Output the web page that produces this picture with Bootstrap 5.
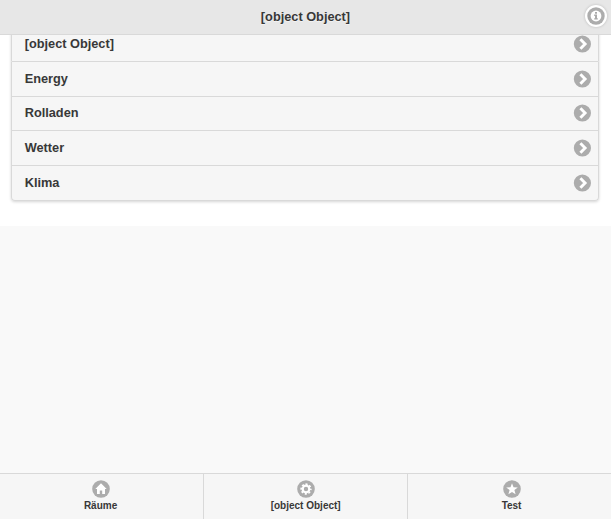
<!DOCTYPE html>
<html lang="de">
<head>
<meta charset="utf-8">
<meta name="viewport" content="width=device-width, initial-scale=1">
<title>Home</title>
<link href="https://cdn.jsdelivr.net/npm/bootstrap@5.3.0/dist/css/bootstrap.min.css" rel="stylesheet">
<style>
body { font-family: "Liberation Sans", Arial, sans-serif; font-size: 12.75px; line-height: 16px; color: #383838; background: #f9f9f9; text-shadow: 0 1px 0 #f3f3f3; overflow: hidden; }
.app-header { height: 35px; background: #e7e7e7; border-bottom: 1px solid #d9d9d9; padding-bottom: 1px; }
.app-header h1 { font-size: 12.75px; line-height: 16px; }
.info-btn { width: 22px; height: 22px; right: 4px; top: 5px; background: #fff; box-shadow: 0 0 3px rgba(0,0,0,.2); }
.page-content { height: 226px; padding: 27.3px 12px 0 11px; background: #fff; }
.menu-list { --bs-list-group-bg: #f6f6f6; --bs-list-group-border-color: #d9d9d9; --bs-list-group-color: #383838; --bs-list-group-border-radius: 4px; box-shadow: 0 1px 3px rgba(0,0,0,.17); }
.menu-list .list-group-item { height: 34.7px; padding: 0 7px 0 12.7px; }
.menu-list .list-group-item:nth-child(1) { padding-bottom: 1.5px; }
.menu-list .list-group-item:nth-child(3) { padding-bottom: 1px; }
.app-footer { height: 46px; background: #f6f6f6; border-top: 1px solid #d9d9d9; }
.tab-link { flex: 0 0 33.3333%; color: #383838; font-size: 10px; line-height: 12px; padding-top: 5.5px; }
.tab-link + .tab-link { border-left: 1px solid #d9d9d9; }
.tab-link:first-child { flex-basis: 33.25%; padding-right: 2px; }
.tab-link:nth-child(2) { flex-basis: 33.4%; }
.tab-link:last-child { padding-left: 4px; }
.tab-link svg { margin-bottom: 2.5px; }
svg { display: block; flex: none; }
</style>
<script src="https://cdn.jsdelivr.net/npm/bootstrap@5.3.0/dist/js/bootstrap.bundle.min.js"></script>
</head>
<body>
<svg width="0" height="0" class="d-none">
  <symbol id="chev" viewBox="0 0 18 18"><circle cx="9.4" cy="9" r="8.6" fill="#acacac"/><path d="M7.4 4.2 12.1 9 7.4 13.8" fill="none" stroke="#fff" stroke-width="2.9"/></symbol>
</svg>
<header class="app-header fixed-top d-flex align-items-center justify-content-center">
  <h1 class="m-0 fw-bold">[object Object]</h1>
  <a href="#" class="info-btn position-absolute rounded-circle d-flex align-items-center justify-content-center" aria-label="Info">
    <svg width="18" height="18" viewBox="0 0 18 18"><circle cx="9" cy="9" r="8.7" fill="#acacac"/><circle cx="9" cy="9" r="5.4" fill="#fff"/><path d="M8 5h2v1.7H8zM7.2 7.6H10v3.6h.8v1.3H7.2v-1.3H8V8.9h-.8z" fill="#aaa"/></svg>
  </a>
</header>
<main class="page-content">
  <div class="list-group menu-list fw-bold">
    <a href="#" class="list-group-item d-flex align-items-center justify-content-between">[object Object]<svg width="18" height="18"><use href="#chev"/></svg></a>
    <a href="#" class="list-group-item d-flex align-items-center justify-content-between">Energy<svg width="18" height="18"><use href="#chev"/></svg></a>
    <a href="#" class="list-group-item d-flex align-items-center justify-content-between">Rolladen<svg width="18" height="18"><use href="#chev"/></svg></a>
    <a href="#" class="list-group-item d-flex align-items-center justify-content-between">Wetter<svg width="18" height="18"><use href="#chev"/></svg></a>
    <a href="#" class="list-group-item d-flex align-items-center justify-content-between">Klima<svg width="18" height="18"><use href="#chev"/></svg></a>
  </div>
</main>
<footer class="app-footer fixed-bottom">
  <nav class="d-flex h-100 fw-bold">
    <a href="#" class="tab-link d-flex flex-column align-items-center text-decoration-none">
      <svg width="18" height="18" viewBox="0 0 18 18"><circle cx="9" cy="9" r="8.8" fill="#acacac"/><path d="M9 3.2 3.3 9H5v5h2.8v-3.4h2.4V14H13V9h1.7z" fill="#fff"/></svg>
      <span>Räume</span>
    </a>
    <a href="#" class="tab-link d-flex flex-column align-items-center text-decoration-none">
      <svg width="18" height="18" viewBox="0 0 18 18"><circle cx="9" cy="9" r="8.8" fill="#acacac"/><circle cx="9" cy="9" r="3.3" fill="none" stroke="#fff" stroke-width="2.2"/><circle cx="9" cy="9" r="4.8" fill="none" stroke="#fff" stroke-width="1.7" stroke-dasharray="2.1 1.67" stroke-dashoffset="1.05"/></svg>
      <span>[object Object]</span>
    </a>
    <a href="#" class="tab-link d-flex flex-column align-items-center text-decoration-none">
      <svg width="18" height="18" viewBox="0 0 18 18"><circle cx="9" cy="9" r="8.8" fill="#acacac"/><path d="m9 3.2 1.500 4 4.300.2-3.400 2.700 1.200 4.100L9 11.900l-3.600 2.300 1.200-4.100-3.400-2.700 4.300-.2z" fill="#fff"/></svg>
      <span>Test</span>
    </a>
  </nav>
</footer>
</body>
</html>
